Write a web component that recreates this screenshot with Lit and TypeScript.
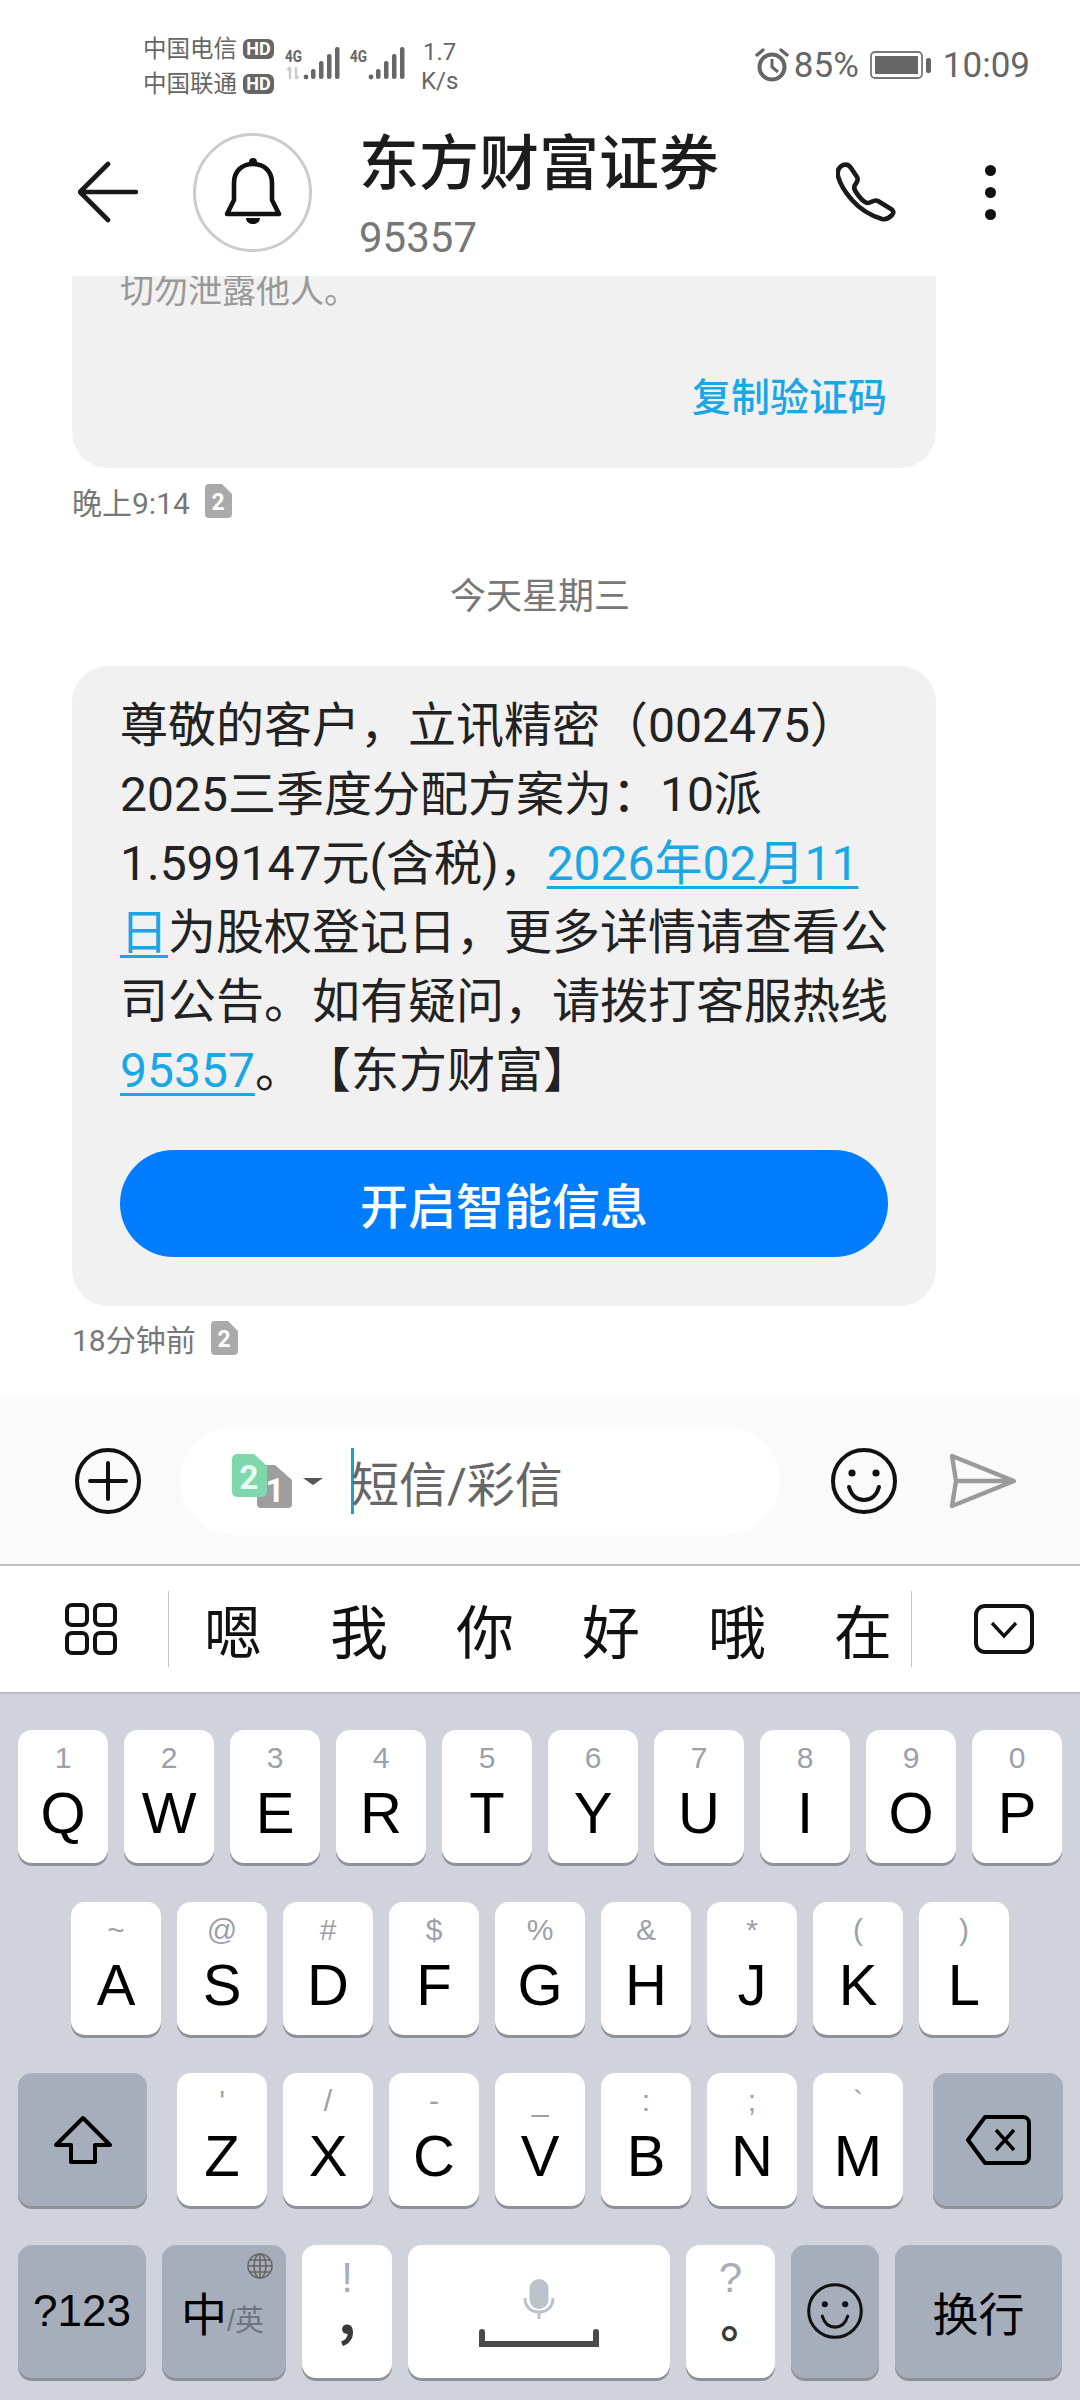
import { LitElement, html, css, svg } from "lit";
import { customElement } from "lit/decorators.js";

type KeyDef = { letter: string; hint: string };

const toKeys = (letters: string, hints: string[]): KeyDef[] =>
  letters.split("").map((letter, i) => ({ letter, hint: hints[i] }));

const ROW_1 = toKeys("QWERTYUIOP", ["1", "2", "3", "4", "5", "6", "7", "8", "9", "0"]);
const ROW_2 = toKeys("ASDFGHJKL", ["~", "@", "#", "$", "%", "&", "*", "(", ")"]);
const ROW_3 = toKeys("ZXCVBNM", ["'", "/", "-", "_", ":", ";", "`"]);
const CANDIDATES = ["嗯", "我", "你", "好", "哦", "在"];

const smile = (size: number, stroke: number) => svg`
  <svg width=${size} height=${size} viewBox="0 0 66 66">
    <circle cx="33" cy="33" r="31" fill="none" stroke="#111" stroke-width=${stroke}></circle>
    <circle cx="21" cy="25" r="3.6" fill="#111"></circle>
    <circle cx="45" cy="25" r="3.6" fill="#111"></circle>
    <path d="M18 39c3 10 9 13 15 13s12-3 15-13" fill="none" stroke="#111" stroke-width=${stroke} stroke-linecap="round"></path>
  </svg>`;

const signal = (label: string, withArrows: boolean) => svg`
  <svg width="56" height="36" viewBox="0 0 56 36">
    <text x="0" y="15" font-family="Roboto, sans-serif" font-weight="700" font-size="16" fill="#666" textLength="17" lengthAdjust="spacingAndGlyphs">${label}</text>
    ${withArrows
      ? svg`<path d="M5 20v12M2.500 23l2.500-3 M11 20v12M13.500 29l-2.500 3" stroke="#ccc" stroke-width="2.4" fill="none"></path>`
      : ""}
    <circle cx="21" cy="30" r="2.4" fill="#666"></circle>
    <rect x="26" y="22" width="4.500" height="10" rx="2" fill="#666"></rect>
    <rect x="34" y="14" width="4.500" height="18" rx="2" fill="#666"></rect>
    <rect x="42" y="7" width="4.500" height="25" rx="2" fill="#666"></rect>
    <rect x="50" y="0" width="4.500" height="32" rx="2" fill="#666"></rect>
  </svg>`;

const simTag = html`<svg width="27" height="34" viewBox="0 0 27 34">
  <path d="M4 0h13l10 10v20a4 4 0 0 1-4 4H4a4 4 0 0 1-4-4V4a4 4 0 0 1 4-4z" fill="#aaa"></path>
  <text x="13" y="26" text-anchor="middle" font-family="Roboto, sans-serif" font-weight="700" font-size="23" fill="#fff">2</text>
</svg>`;

@customElement("app-root")
export class AppRoot extends LitElement {
  static styles = css`
    :host {
      display: block;
      width: 1080px;
      height: 2400px;
      overflow: hidden;
      background: #fff;
      font-family: Roboto, "Noto Sans CJK SC", sans-serif;
      color: #222;
    }
    .page {
      display: flex;
      flex-direction: column;
      height: 2400px;
    }

    /* status bar */
    .status {
      height: 100px;
      display: flex;
      align-items: center;
      padding: 34px 50px 0 143px;
      box-sizing: border-box;
      color: #666;
    }
    .carriers {
      display: flex;
      flex-direction: column;
      gap: 9px;
      font-size: 23.5px;
      line-height: 26px;
      margin-top: -2px;
    }
    .carrier {
      display: flex;
      align-items: center;
      gap: 6px;
    }
    .hd {
      width: 31px;
      height: 20px;
      border-radius: 6px;
      background: #666;
      color: #fff;
      font-size: 18px;
      line-height: 20px;
      font-weight: 700;
      text-align: center;
    }
    .signals {
      display: flex;
      gap: 9px;
      margin-left: 11px;
      margin-top: -4px;
    }
    .rate {
      margin-left: 15px;
      font-size: 24px;
      line-height: 29px;
      text-align: center;
    }
    .sys {
      margin-left: auto;
      display: flex;
      align-items: center;
      font-size: 35px;
      margin-top: -4px;
    }
    .pct {
      margin-left: 5px;
    }
    .battery {
      margin-left: 11px;
    }
    .clock {
      margin-left: 12px;
    }

    /* conversation header */
    .head {
      height: 176px;
      display: flex;
      align-items: center;
      padding: 8px 0 0 78px;
      box-sizing: border-box;
    }
    .avatar {
      width: 119px;
      height: 119px;
      box-sizing: border-box;
      border: 3px solid #ccc;
      border-radius: 50%;
      display: flex;
      align-items: center;
      justify-content: center;
      margin-left: 55px;
    }
    .who {
      margin-left: 47px;
      width: 477px;
      padding-top: 6px;
      flex-shrink: 0;
    }
    .name {
      font-size: 60px;
      line-height: 76px;
      font-weight: 500;
      color: #1c1c1c;
    }
    .num {
      font-size: 42px;
      line-height: 50px;
      color: #777;
      margin-top: 10px;
    }
    .dots {
      margin-left: 89px;
      display: flex;
      flex-direction: column;
      gap: 11px;
      flex-shrink: 0;
    }
    .dots i {
      width: 11px;
      height: 11px;
      border-radius: 50%;
      background: #111;
    }

    /* message list */
    .msgs {
      height: 1121px;
      overflow: hidden;
      padding: 0 72px;
      box-sizing: border-box;
    }
    .bubble {
      width: 864px;
      box-sizing: border-box;
      background: #f1f1f1;
      border-radius: 36px;
      padding: 24.5px 48px 49px;
    }
    .bubble.earlier {
      margin-top: -10px;
      padding: 0 49px 42px 48px;
      border-radius: 0 0 36px 36px;
    }
    .faded {
      font-size: 34px;
      line-height: 50px;
      color: #999;
    }
    .copy {
      margin-top: 54px;
      text-align: right;
      font-size: 39px;
      line-height: 56px;
      font-weight: 500;
      color: #1aa7e6;
    }
    .stamp {
      display: flex;
      align-items: center;
      gap: 15px;
      height: 34px;
      margin-top: 16px;
      font-size: 30px;
      color: #777;
    }
    .stamp.latest {
      margin-top: 15px;
    }
    .day {
      margin: 54px -72px 44px;
      text-align: center;
      font-size: 36px;
      line-height: 50px;
      color: #777;
    }
    .body {
      font-size: 48px;
      line-height: 69px;
      color: #222;
      white-space: nowrap;
      text-spacing-trim: space-all;
    }
    .body a {
      color: #1aa7e6;
      text-decoration: underline;
      text-decoration-thickness: 3px;
      text-underline-offset: 6px;
    }
    .cta {
      margin-top: 45px;
      height: 107px;
      border-radius: 54px;
      background: #007dff;
      color: #fff;
      font-size: 48px;
      font-weight: 500;
      display: flex;
      align-items: center;
      justify-content: center;
    }

    /* compose row */
    .compose {
      height: 169px;
      box-sizing: border-box;
      background: #fafafa;
      border-bottom: 2px solid #bdbdbd;
      display: flex;
      align-items: center;
      padding-left: 75px;
    }
    .pill {
      margin-left: 39px;
      width: 600px;
      height: 108px;
      border-radius: 54px;
      background: #fff;
      display: flex;
      align-items: center;
      padding-left: 52px;
      box-sizing: border-box;
    }
    .caret {
      width: 3px;
      height: 66px;
      margin-left: 27px;
      background: #1f9fd0;
    }
    .hint {
      font-size: 48px;
      color: #666;
      margin-left: -3px;
    }
    .smile {
      margin-left: 51px;
      line-height: 0;
    }
    .send {
      margin-left: 52px;
      line-height: 0;
    }

    /* candidate strip */
    .strip {
      height: 128px;
      box-sizing: border-box;
      display: flex;
      align-items: center;
      padding-left: 65px;
      border-bottom: 2px solid #bdbdbd;
      background: #fff;
    }
    .rule {
      width: 1px;
      height: 76px;
      background: #c4c4c4;
    }
    .rule.lead {
      margin-left: 51px;
    }
    .fold {
      margin-left: 62px;
    }
    .cands {
      display: flex;
      gap: 68px;
      margin: 0 19px 0 35px;
      font-size: 58px;
      color: #111;
    }
    .cands span {
      width: 58px;
      text-align: center;
    }

    /* keyboard */
    .kb {
      flex: 1;
      background: #d0d3dc;
      display: flex;
      flex-direction: column;
      gap: 38.5px;
      padding: 36px 18px 0;
      font-family: "Liberation Sans", Arial, "Noto Sans CJK SC", sans-serif;
    }
    .row {
      display: flex;
      gap: 16px;
    }
    .row.home {
      padding-left: 53px;
    }
    .key {
      width: 90px;
      height: 133px;
      flex-shrink: 0;
      box-sizing: border-box;
      background: #fff;
      border-radius: 14px;
      box-shadow: 0 3px 0 #8f9199;
      display: flex;
      flex-direction: column;
      align-items: center;
      padding-top: 13px;
      position: relative;
    }
    .key .top {
      height: 30px;
      font-size: 30px;
      line-height: 30px;
      color: #9ca0aa;
    }
    .key .main {
      margin-top: 5px;
      font-size: 58px;
      line-height: 70px;
      color: #000;
    }
    .key.fn {
      background: #a7aebb;
      justify-content: center;
      padding-top: 0;
      font-size: 44px;
      color: #000;
    }
    .shift {
      width: 129px;
      margin-right: 14px;
    }
    .del {
      width: 130px;
      margin-left: 14px;
    }
    .sym {
      width: 128px;
    }
    .key.fn.lang {
      width: 124px;
      flex-direction: row;
      align-items: center;
      padding-left: 19px;
      justify-content: flex-start;
      font-size: 46px;
    }
    .lang small {
      font-size: 29px;
      color: #6f7580;
      margin-top: 14px;
    }
    .globe {
      position: absolute;
      top: 8px;
      right: 13px;
      line-height: 0;
    }
    .key .puncthint {
      font-size: 42px;
      color: #a8acb5;
      margin-top: 5px;
    }
    .key .comma,
    .key .stop {
      font-family: "Noto Sans CJK SC", sans-serif;
      font-size: 46px;
      line-height: 60px;
      font-weight: 700;
      color: #3a3a3a;
    }
    .key .comma {
      margin-top: -12px;
      font-size: 54px;
    }
    .key .stop {
      margin-top: -6px;
      padding-left: 26px;
    }
    .space {
      width: 262px;
      padding-top: 34px;
    }
    .space svg + svg {
      margin-top: 10px;
    }
    .period {
      width: 89px;
    }
    .emoji {
      width: 88px;
    }
    .key.fn.enter {
      flex: 1;
      width: auto;
      font-size: 46px;
    }
  `;

  render() {
    return html`<div class="page">
      <div class="status">
        <div class="carriers">
          <div class="carrier">中国电信<span class="hd">HD</span></div>
          <div class="carrier">中国联通<span class="hd">HD</span></div>
        </div>
        <div class="signals">${signal("4G", true)}${signal("4G", false)}</div>
        <div class="rate">1.7<br />K/s</div>
        <div class="sys">
          <svg width="34" height="34" viewBox="0 0 34 34">
            <circle cx="17" cy="19" r="12.5" fill="none" stroke="#666" stroke-width="4"></circle>
            <path d="M17 11v8l6 5" fill="none" stroke="#666" stroke-width="3"></path>
            <path d="M2 7l6-5M32 7l-6-5" fill="none" stroke="#666" stroke-width="3.4" stroke-linecap="round"></path>
          </svg>
          <span class="pct">85%</span>
          <svg class="battery" width="61" height="28" viewBox="0 0 61 28">
            <rect x="1" y="1" width="51" height="26" rx="4" fill="none" stroke="#777" stroke-width="1.8"></rect>
            <rect x="5" y="5" width="43" height="18" fill="#666"></rect>
            <rect x="56" y="7" width="5" height="15" rx="2" fill="#666"></rect>
          </svg>
          <span class="clock">10:09</span>
        </div>
      </div>

      <div class="head">
        <svg width="60" height="62" viewBox="0 0 60 62">
          <path d="M30 3L2 31L30 59M2 31H58" fill="none" stroke="#1a1a1a" stroke-width="4.6" stroke-linecap="round" stroke-linejoin="round"></path>
        </svg>
        <div class="avatar">
          <svg width="58" height="68" viewBox="0 0 58 68">
            <circle cx="29" cy="4" r="4" fill="#111"></circle>
            <path d="M3 56L10 42V25C10 13 18 6 29 6C40 6 48 13 48 25V42L55 56Z" fill="none" stroke="#111" stroke-width="4.6" stroke-linejoin="round"></path>
            <path d="M22 60H36C36 68 22 68 22 60Z" fill="#111"></path>
          </svg>
        </div>
        <div class="who">
          <div class="name">东方财富证券</div>
          <div class="num">95357</div>
        </div>
        <svg width="60" height="60" viewBox="0 0 60 60">
          <path d="M7 3C10 2 13 3 15 6L21 15C23 18 21 20 19 23C17 26 19 29 22 33C25 37 29 41 32 41C35 41 38 37 42 39L55 47C58 49 58 51 56 53C53 56 50 58 46 57C36 54 24 47 16 38C9 30 4 22 2 14C1 9 3 5 7 3Z" fill="none" stroke="#1a1a1a" stroke-width="4.6" stroke-linejoin="round"></path>
        </svg>
        <div class="dots"><i></i><i></i><i></i></div>
      </div>

      <div class="msgs">
        <div class="bubble earlier">
          <div class="faded">切勿泄露他人。</div>
          <div class="copy">复制验证码</div>
        </div>
        <div class="stamp">晚上9:14 ${simTag}</div>
        <div class="day">今天星期三</div>
        <div class="bubble">
          <div class="body">尊敬的客户，立讯精密（002475）<br />2025三季度分配方案为：10派<br />1.599147元(含税)，<a>2026年02月11<br />日</a>为股权登记日，更多详情请查看公<br />司公告。如有疑问，请拨打客服热线<br /><a>95357</a>。【东方财富】</div>
          <div class="cta">开启智能信息</div>
        </div>
        <div class="stamp latest">18分钟前 ${simTag}</div>
      </div>

      <div class="compose">
        <svg width="66" height="66" viewBox="0 0 66 66">
          <circle cx="33" cy="33" r="31" fill="none" stroke="#111" stroke-width="4"></circle>
          <path d="M15 33H51M33 15V51" stroke="#111" stroke-width="4" stroke-linecap="round"></path>
        </svg>
        <div class="pill">
          <svg width="92" height="54" viewBox="0 0 92 54">
            <path d="M29 11h14l17 15v24a4 4 0 0 1-4 4H29a4 4 0 0 1-4-4V15a4 4 0 0 1 4-4z" fill="#9e9e9e"></path>
            <path d="M5 0h17l13 12v26a5 5 0 0 1-5 5H5a5 5 0 0 1-5-5V5a5 5 0 0 1 5-5z" fill="#7fd8ab"></path>
            <text x="17" y="35" text-anchor="middle" font-family="Roboto, sans-serif" font-weight="700" font-size="33" fill="#eafff4">2</text>
            <text x="43" y="48" text-anchor="middle" font-family="Roboto, sans-serif" font-weight="700" font-size="33" fill="#fff">1</text>
            <path d="M71 24h20l-10 7z" fill="#555"></path>
          </svg>
          <span class="caret"></span>
          <span class="hint">短信/彩信</span>
        </div>
        <span class="smile">${smile(66, 4)}</span>
        <span class="send">
          <svg width="68" height="56" viewBox="0 0 68 56">
            <path d="M3 3L65 28L3 53L7 28ZM7 28H65" fill="none" stroke="#9a9a9a" stroke-width="4.4" stroke-linejoin="round"></path>
          </svg>
        </span>
      </div>

      <div class="strip">
        <svg width="52" height="52" viewBox="0 0 52 52">
          <g fill="none" stroke="#111" stroke-width="4">
            <rect x="2" y="2" width="20" height="20" rx="5"></rect>
            <rect x="30" y="2" width="20" height="20" rx="5"></rect>
            <rect x="2" y="30" width="20" height="20" rx="5"></rect>
            <rect x="30" y="30" width="20" height="20" rx="5"></rect>
          </g>
        </svg>
        <span class="rule lead"></span>
        <div class="cands">${CANDIDATES.map((c) => html`<span>${c}</span>`)}</div>
        <span class="rule"></span>
        <svg class="fold" width="60" height="50" viewBox="0 0 60 50">
          <rect x="2" y="2" width="56" height="46" rx="9" fill="none" stroke="#111" stroke-width="4"></rect>
          <path d="M18 19L30 32L42 19" fill="none" stroke="#111" stroke-width="3.4"></path>
        </svg>
      </div>

      <div class="kb">
        <div class="row">${ROW_1.map((k) => this.letterKey(k))}</div>
        <div class="row home">${ROW_2.map((k) => this.letterKey(k))}</div>
        <div class="row">
          <div class="key fn shift">
            <svg width="58" height="50" viewBox="0 0 58 50">
              <path d="M29 3L56 30H41V47H17V30H2Z" fill="none" stroke="#000" stroke-width="4" stroke-linejoin="round"></path>
            </svg>
          </div>
          ${ROW_3.map((k) => this.letterKey(k))}
          <div class="key fn del">
            <svg width="66" height="50" viewBox="0 0 66 50">
              <path d="M20 2H58a6 6 0 0 1 6 6V42a6 6 0 0 1-6 6H20L3 25Z" fill="none" stroke="#000" stroke-width="4" stroke-linejoin="round"></path>
              <path d="M31 15L49 35M49 15L31 35" stroke="#000" stroke-width="3.4"></path>
            </svg>
          </div>
        </div>
        <div class="row">
          <div class="key fn sym">?123</div>
          <div class="key fn lang">
            中<small>/英</small>
            <span class="globe">
              <svg width="26" height="26" viewBox="0 0 26 26">
                <g fill="none" stroke="#666" stroke-width="1.6">
                  <circle cx="13" cy="13" r="12"></circle>
                  <ellipse cx="13" cy="13" rx="6" ry="12"></ellipse>
                  <path d="M13 1V25M1 13H25M3 7H23M3 19H23"></path>
                </g>
              </svg>
            </span>
          </div>
          <div class="key"><span class="top puncthint">!</span><span class="comma">,</span></div>
          <div class="key space">
            <svg width="32" height="40" viewBox="0 0 32 40">
              <rect x="6.500" y="0" width="19" height="30" rx="9.500" fill="#bcc2cc"></rect>
              <path d="M2 19C2 28 8 33 16 33S30 28 30 19M16 33V40" fill="none" stroke="#bcc2cc" stroke-width="3"></path>
            </svg>
            <svg width="120" height="18" viewBox="0 0 120 18">
              <path d="M3 3V15H117V3" fill="none" stroke="#4a4a4a" stroke-width="6" stroke-linecap="round"></path>
            </svg>
          </div>
          <div class="key period"><span class="top puncthint">?</span><span class="stop">。</span></div>
          <div class="key fn emoji">${smile(56, 3.6)}</div>
          <div class="key fn enter">换行</div>
        </div>
      </div>
    </div>`;
  }

  private letterKey(k: KeyDef) {
    return html`<div class="key"><span class="top">${k.hint}</span><span class="main">${k.letter}</span></div>`;
  }
}
